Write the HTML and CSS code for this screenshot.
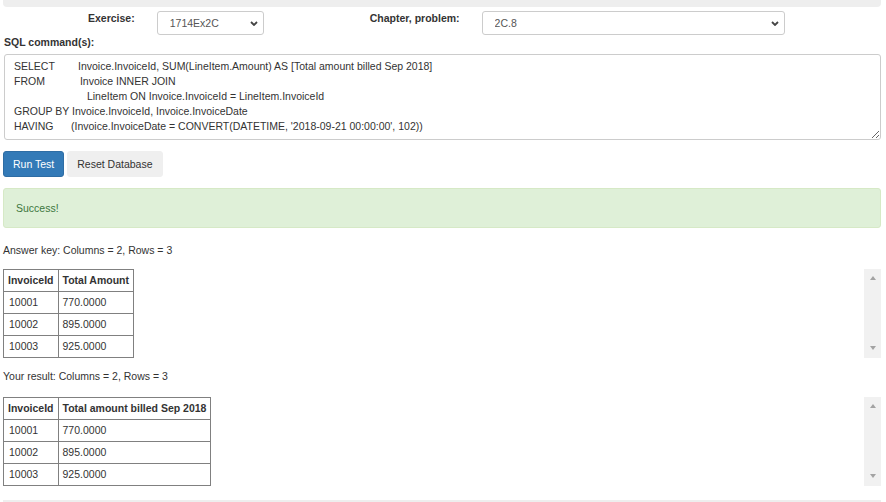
FILE: index.html
```html
<!DOCTYPE html>
<html>
<head>
<meta charset="utf-8">
<link rel="stylesheet" href="styles.css">
</head>
<body>
<div class="page">
  <div class="panel-tail"></div>
  <div class="form-row">
    <label class="lbl lbl-ex">Exercise:</label>
    <div class="select-wrap sel-ex">
      <select class="select"><option>1714Ex2C</option></select>
      <svg class="chev" width="8" height="5" viewBox="0 0 8 5"><polyline points="1,1 4,4 7,1" fill="none" stroke="#444" stroke-width="1.8"/></svg>
    </div>
    <label class="lbl lbl-ch">Chapter, problem:</label>
    <div class="select-wrap sel-ch">
      <select class="select"><option>2C.8</option></select>
      <svg class="chev" width="8" height="5" viewBox="0 0 8 5"><polyline points="1,1 4,4 7,1" fill="none" stroke="#444" stroke-width="1.8"/></svg>
    </div>
  </div>
  <div class="lbl sql-lbl">SQL command(s):</div>
  <textarea class="sql">SELECT        Invoice.InvoiceId, SUM(LineItem.Amount) AS [Total amount billed Sep 2018]
FROM            Invoice INNER JOIN
                         LineItem ON Invoice.InvoiceId = LineItem.InvoiceId
GROUP BY Invoice.InvoiceId, Invoice.InvoiceDate
HAVING      (Invoice.InvoiceDate = CONVERT(DATETIME, '2018-09-21 00:00:00', 102))</textarea>
  <div class="btns">
    <button class="btn btn-primary">Run Test</button>
    <button class="btn btn-default">Reset Database</button>
  </div>
  <div class="alert">Success!</div>
  <p class="caption cap1">Answer key: Columns = 2, Rows = 3</p>
  <div class="scrollbox">
    <div class="scroll-content">
      <table class="res">
        <tr><th>InvoiceId</th><th>Total Amount</th></tr>
        <tr><td>10001</td><td>770.0000</td></tr>
        <tr><td>10002</td><td>895.0000</td></tr>
        <tr><td>10003</td><td>925.0000</td></tr>
      </table>
    </div>
    <div class="fake-scrollbar"><span class="arr up"></span><span class="arr down"></span></div>
  </div>
  <p class="caption cap2">Your result: Columns = 2, Rows = 3</p>
  <div class="scrollbox box2">
    <div class="scroll-content">
      <table class="res">
        <tr><th>InvoiceId</th><th>Total amount billed Sep 2018</th></tr>
        <tr><td>10001</td><td>770.0000</td></tr>
        <tr><td>10002</td><td>895.0000</td></tr>
        <tr><td>10003</td><td>925.0000</td></tr>
      </table>
    </div>
    <div class="fake-scrollbar"><span class="arr up"></span><span class="arr down"></span></div>
  </div>
  <div class="bottom-rule"></div>
</div>
</body>
</html>
```
FILE: styles.css
```css
html, body {
  margin: 0;
  padding: 0;
  background: #fff;
}
body {
  font-family: "Liberation Sans", Arial, sans-serif;
  font-size: 10.5px;
  line-height: 15px;
  color: #333;
}
.page {
  padding: 0 5px 0 3px;
  overflow: hidden;
  height: 502px;
}
.panel-tail {
  height: 7px;
  background: #eee;
  border-radius: 0 0 4px 4px;
}
.form-row {
  display: flex;
  align-items: flex-start;
  margin-top: 4px;
  height: 24px;
  padding-left: 85px;
}
.lbl {
  font-weight: bold;
  line-height: 15px;
}
.lbl-ex { margin-right: 22px; }
.lbl-ch { margin-left: 106px; margin-right: 22px; }
.select-wrap {
  position: relative;
  height: 24px;
}
.sel-ex { width: 107px; }
.sel-ch { width: 303px; }
.select {
  appearance: none;
  -webkit-appearance: none;
  width: 100%;
  height: 24px;
  box-sizing: border-box;
  border: 1px solid #ccc;
  border-radius: 3px;
  background: #fff;
  font-family: "Liberation Sans", Arial, sans-serif;
  font-size: 10.5px;
  color: #555;
  padding: 0 0 0 12px;
  margin: 0;
}
.chev {
  position: absolute;
  right: 6px;
  top: 10px;
}
.sql-lbl {
  margin-left: 1px;
  margin-top: 0;
}
.sql {
  display: block;
  box-sizing: border-box;
  width: 877px;
  height: 86px;
  margin: 4px 0 0 1px;
  padding: 4px 9px;
  border: 1px solid #ccc;
  border-radius: 3px;
  font-family: "Liberation Sans", Arial, sans-serif;
  font-size: 10.5px;
  line-height: 15px;
  color: #333;
  white-space: pre;
  overflow: hidden;
}
.btns {
  display: flex;
  gap: 3px;
  margin-top: 11px;
}
.btn {
  height: 26px;
  box-sizing: border-box;
  font-family: "Liberation Sans", Arial, sans-serif;
  font-size: 10.5px;
  line-height: 15px;
  padding: 4px 9px;
  border-radius: 3px;
  border: 1px solid transparent;
  margin: 0;
}
.btn-primary {
  background: #337ab7;
  border-color: #2e6da4;
  color: #fff;
}
.btn-default {
  background: #efefef;
  border-color: #efefef;
  color: #333;
}
.alert {
  margin-top: 11px;
  height: 40px;
  box-sizing: border-box;
  padding: 12px 12px;
  background: #dff0d8;
  border: 1px solid #d6e9c6;
  border-radius: 3px;
  color: #3c763d;
  width: 878px;
}
.caption {
  margin: 0;
  line-height: 15px;
}
.cap1 { margin-top: 15px; }
.cap2 { margin-top: 11px; }
.scrollbox {
  display: flex;
  width: 878px;
  margin-top: 11px;
}
.box2 { margin-top: 13px; }
.scroll-content {
  flex: 1;
}
.res {
  border-collapse: collapse;
}
.res th, .res td {
  border: 1px solid #808080;
  padding: 3px 4px;
  line-height: 15px;
  text-align: left;
  white-space: nowrap;
}
.res th { font-weight: bold; }
.res td:first-child { padding-left: 5px; padding-right: 11px; }
.fake-scrollbar {
  width: 17px;
  background: #f1f1f1;
  display: flex;
  flex-direction: column;
  justify-content: space-between;
  align-items: center;
  padding: 7px 0 8px;
  box-sizing: border-box;
}
.arr {
  width: 0;
  height: 0;
  border-left: 3.5px solid transparent;
  border-right: 3.5px solid transparent;
}
.up { border-bottom: 4px solid #a3a3a3; }
.down { border-top: 4px solid #a3a3a3; }
.bottom-rule {
  margin-top: 14px;
  height: 2px;
  background: #eee;
  width: 878px;
}
```
